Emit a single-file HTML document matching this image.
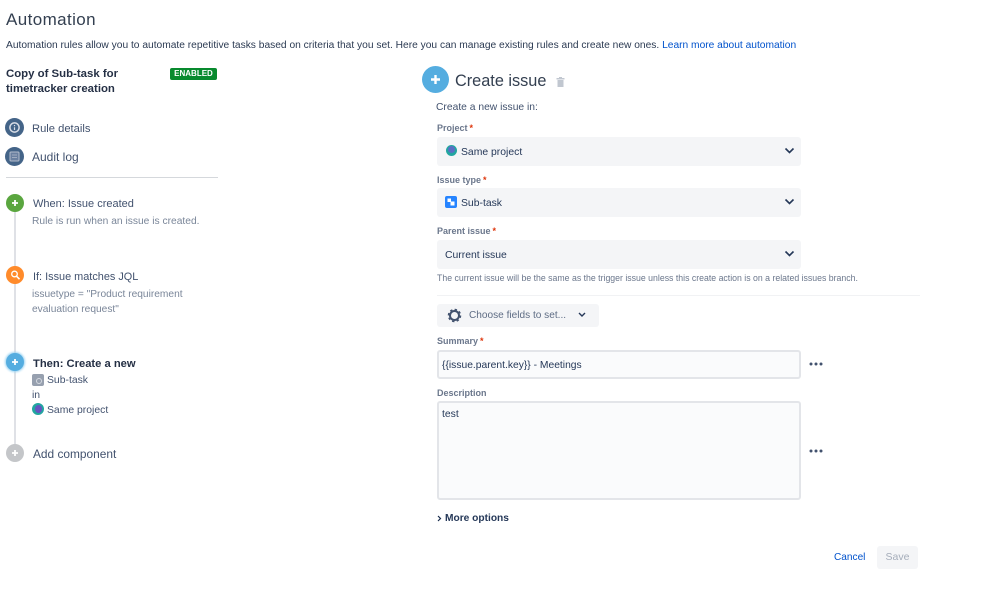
<!DOCTYPE html>
<html><head><meta charset="utf-8"><style>
html,body{margin:0;padding:0;background:#fff}
body{width:999px;height:591px;position:relative;overflow:hidden;font-family:"Liberation Sans",sans-serif;color:#172b4d}
.t{position:absolute;white-space:nowrap;line-height:16px}
.b{position:absolute;box-sizing:border-box}
.c{position:absolute;border-radius:50%}
svg{position:absolute;overflow:visible}
.l{font-size:9px;font-weight:bold;color:#6b778c}
.l i{color:#de350b;font-style:normal;margin-left:2px}
.sel{background:#f4f5f7;border-radius:3px;left:437px;width:364px;height:29px}
.s{font-size:10.4px;color:#253858}
</style></head><body>
<div class="t" style="left:6px;top:10px;font-size:17px;line-height:20px;color:#333f50;letter-spacing:.4px">Automation</div>
<div class="t" style="left:6px;top:38px;font-size:10.23px;color:#2b3a52">Automation rules allow you to automate repetitive tasks based on criteria that you set. Here you can manage existing rules and create new ones. <span style="color:#0052cc">Learn more about automation</span></div>
<div class="t" style="left:6px;top:67px;font-size:11.4px;font-weight:bold;line-height:15px;color:#253045">Copy of Sub-task for<br>timetracker creation</div>
<div class="b" style="left:170px;top:68px;width:47px;height:12px;background:#088a2e;border-radius:2px"></div>
<div class="t" style="left:170px;top:68px;width:47px;text-align:center;font-size:8px;line-height:12px;font-weight:bold;color:#fff">ENABLED</div>

<div class="c" style="left:5px;top:118px;width:19px;height:19px;background:#446488"></div>
<svg style="left:5px;top:118px" width="19" height="19"><circle cx="9.5" cy="9.500" r="4.6" fill="none" stroke="#d8dde6" stroke-width="1.5"/><path d="M9.500 7v1.200M9.500 9.200v2.800" stroke="#d8dde6" stroke-width="1.200"/></svg>
<div class="t" style="left:32px;top:121px;font-size:11.2px;color:#42526e">Rule details</div>
<div class="c" style="left:5px;top:147px;width:19px;height:19px;background:#446488"></div>
<svg style="left:5px;top:147px" width="19" height="19"><rect x="5" y="5" width="9" height="9" rx="1" fill="#6a80a0" stroke="#b3bccb" stroke-width="1"/><path d="M7 8h5M7 10.500h5" stroke="#b3bccb" stroke-width=".8"/></svg>
<div class="t" style="left:32px;top:149px;font-size:12px;color:#42526e">Audit log</div>
<div class="b" style="left:6px;top:177px;width:212px;height:1px;background:#d5d8dc"></div>

<div class="b" style="left:14px;top:205px;width:2px;height:245px;background:#dfe1e6"></div>
<div class="c" style="left:6px;top:194px;width:18px;height:18px;background:#5aa63f"></div>
<svg style="left:6px;top:194px" width="18" height="18"><path d="M9 6v6M6 9h6" stroke="#fff" stroke-width="1.800"/></svg>
<div class="t" style="left:33px;top:196px;font-size:11px;color:#42526e">When: Issue created</div>
<div class="t" style="left:32px;top:214px;font-size:10.25px;color:#7a8699">Rule is run when an issue is created.</div>

<div class="c" style="left:6px;top:266px;width:18px;height:18px;background:#ff8b2b"></div>
<svg style="left:6px;top:266px" width="18" height="18"><circle cx="8.500" cy="8" r="2.800" fill="none" stroke="#fff" stroke-width="1.300"/><path d="M10.500 10.200l3 3" stroke="#fff" stroke-width="1.600"/></svg>
<div class="t" style="left:33px;top:269px;font-size:10.9px;color:#42526e">If: Issue matches JQL</div>
<div class="t" style="left:32px;top:287px;font-size:10.2px;line-height:15px;color:#7a8699">issuetype = "Product requirement<br>evaluation request"</div>

<div class="c" style="left:6px;top:353px;width:18px;height:18px;background:#55ade0;box-shadow:0 0 2px 1px #9bd3f2"></div>
<svg style="left:6px;top:353px" width="18" height="18"><path d="M9 6v6M6 9h6" stroke="#fff" stroke-width="1.800"/></svg>
<div class="t" style="left:33px;top:356px;font-size:11.2px;font-weight:bold;color:#253045">Then: Create a new</div>
<div class="b" style="left:32px;top:374px;width:12px;height:12px;background:#97a0af;border-radius:2px"></div>
<div class="c" style="left:35.500px;top:377.500px;width:4px;height:4px;border:.8px solid #d5d9e0"></div>
<div class="t" style="left:47px;top:373px;font-size:10.4px;color:#42526e">Sub-task</div>
<div class="t" style="left:32px;top:388px;font-size:10.4px;color:#42526e">in</div>
<div class="c" style="left:32px;top:403px;width:12px;height:12px;background:#22a6a0"></div>
<div class="c" style="left:34.500px;top:404.500px;width:7px;height:8px;background:#6554c0"></div>
<div class="t" style="left:47px;top:403px;font-size:10.4px;color:#42526e">Same project</div>

<div class="c" style="left:6px;top:444px;width:18px;height:18px;background:#c4c6c9"></div>
<svg style="left:6px;top:444px" width="18" height="18"><path d="M9 6v6M6 9h6" stroke="#fff" stroke-width="1.800"/></svg>
<div class="t" style="left:33px;top:446px;font-size:11.9px;color:#42526e">Add component</div>

<div class="c" style="left:422px;top:66px;width:27px;height:27px;background:#55ade0"></div>
<svg style="left:422px;top:66px" width="27" height="27"><path d="M13.500 9v9M9 13.500h9" stroke="#fff" stroke-width="2.400"/></svg>
<div class="t" style="left:455px;top:71px;font-size:16.3px;line-height:21px;color:#333f50">Create issue</div>
<svg style="left:555px;top:76px" width="11" height="12"><path d="M1.500 2h8v1.500h-8zM2.500 4h6v7h-6zM4 1h3v1H4z" fill="#c1c7d0"/></svg>
<div class="t" style="left:436px;top:100px;font-size:10.3px;color:#42526e">Create a new issue in:</div>

<div class="t l" style="left:437px;top:120px">Project<i>*</i></div>
<div class="b sel" style="top:137px"></div>
<div class="c" style="left:446px;top:145px;width:11px;height:11px;background:#22a6a0"></div>
<div class="c" style="left:448px;top:146px;width:7px;height:7px;background:#5a6fc4"></div>
<div class="t s" style="left:461px;top:145px">Same project</div>
<svg style="left:784px;top:147px" width="11" height="8"><path d="M1.500 1.500l4 4 4-4" fill="none" stroke="#253858" stroke-width="1.600"/></svg>

<div class="t l" style="left:437px;top:172px">Issue type<i>*</i></div>
<div class="b sel" style="top:188px"></div>
<div class="b" style="left:445px;top:196px;width:12px;height:12px;background:#2684ff;border-radius:2px"></div>
<svg style="left:445px;top:196px" width="12" height="12"><rect x="2.500" y="2.500" width="3.500" height="3.500" fill="#fff"/><rect x="5.500" y="5.500" width="4" height="4" fill="#fff"/></svg>
<div class="t s" style="left:461px;top:196px">Sub-task</div>
<svg style="left:784px;top:198px" width="11" height="8"><path d="M1.500 1.500l4 4 4-4" fill="none" stroke="#253858" stroke-width="1.600"/></svg>

<div class="t l" style="left:437px;top:223px">Parent issue<i>*</i></div>
<div class="b sel" style="top:240px"></div>
<div class="t s" style="left:445px;top:248px">Current issue</div>
<svg style="left:784px;top:250px" width="11" height="8"><path d="M1.500 1.500l4 4 4-4" fill="none" stroke="#253858" stroke-width="1.600"/></svg>
<div class="t" style="left:437px;top:270px;font-size:8.74px;color:#6b778c">The current issue will be the same as the trigger issue unless this create action is on a related issues branch.</div>
<div class="b" style="left:437px;top:295px;width:483px;height:1px;background:#f1f2f4"></div>

<div class="b" style="left:437px;top:304px;width:162px;height:23px;background:#f4f5f7;border-radius:3px"></div>
<svg style="left:447px;top:308px" width="15" height="15"><circle cx="7.500" cy="7.500" r="4.500" fill="none" stroke="#42526e" stroke-width="2"/><circle cx="7.500" cy="7.500" r="6" fill="none" stroke="#42526e" stroke-width="1.500" stroke-dasharray="2.400 2.300"/></svg>
<div class="t" style="left:469px;top:308px;font-size:10.1px;color:#5e6c84">Choose fields to set...</div>
<svg style="left:578px;top:312px" width="8" height="6"><path d="M1 1l3 3 3-3" fill="none" stroke="#253858" stroke-width="1.400"/></svg>

<div class="t l" style="left:437px;top:333px">Summary<i>*</i></div>
<div class="b" style="left:437px;top:350px;width:364px;height:29px;background:#fafbfc;border:2px solid #e3e5e9;border-radius:3px"></div>
<div class="t s" style="left:442px;top:358px;font-size:10.3px">{{issue.parent.key}} - Meetings</div>
<svg style="left:809px;top:362px" width="14" height="4" fill="#42526e"><circle cx="2" cy="2" r="1.500"/><circle cx="7" cy="2" r="1.500"/><circle cx="12" cy="2" r="1.500"/></svg>

<div class="t l" style="left:437px;top:385px">Description</div>
<div class="b" style="left:437px;top:401px;width:364px;height:99px;background:#fafbfc;border:2px solid #e3e5e9;border-radius:3px"></div>
<div class="t s" style="left:442px;top:407px">test</div>
<svg style="left:809px;top:449px" width="14" height="4" fill="#42526e"><circle cx="2" cy="2" r="1.500"/><circle cx="7" cy="2" r="1.500"/><circle cx="12" cy="2" r="1.500"/></svg>

<svg style="left:437px;top:515px" width="5" height="7"><path d="M1 1l2.500 2.500L1 6" fill="none" stroke="#172b4d" stroke-width="1.200"/></svg>
<div class="t" style="left:445px;top:511px;font-size:10.2px;font-weight:bold;color:#253858">More options</div>

<div class="t" style="left:834px;top:550px;font-size:10.1px;color:#0052cc">Cancel</div>
<div class="b" style="left:877px;top:546px;width:41px;height:23px;background:#f4f5f7;border-radius:3px"></div>
<div class="t" style="left:877px;top:549px;width:41px;text-align:center;font-size:10.5px;color:#a5adba">Save</div>
</body></html>
